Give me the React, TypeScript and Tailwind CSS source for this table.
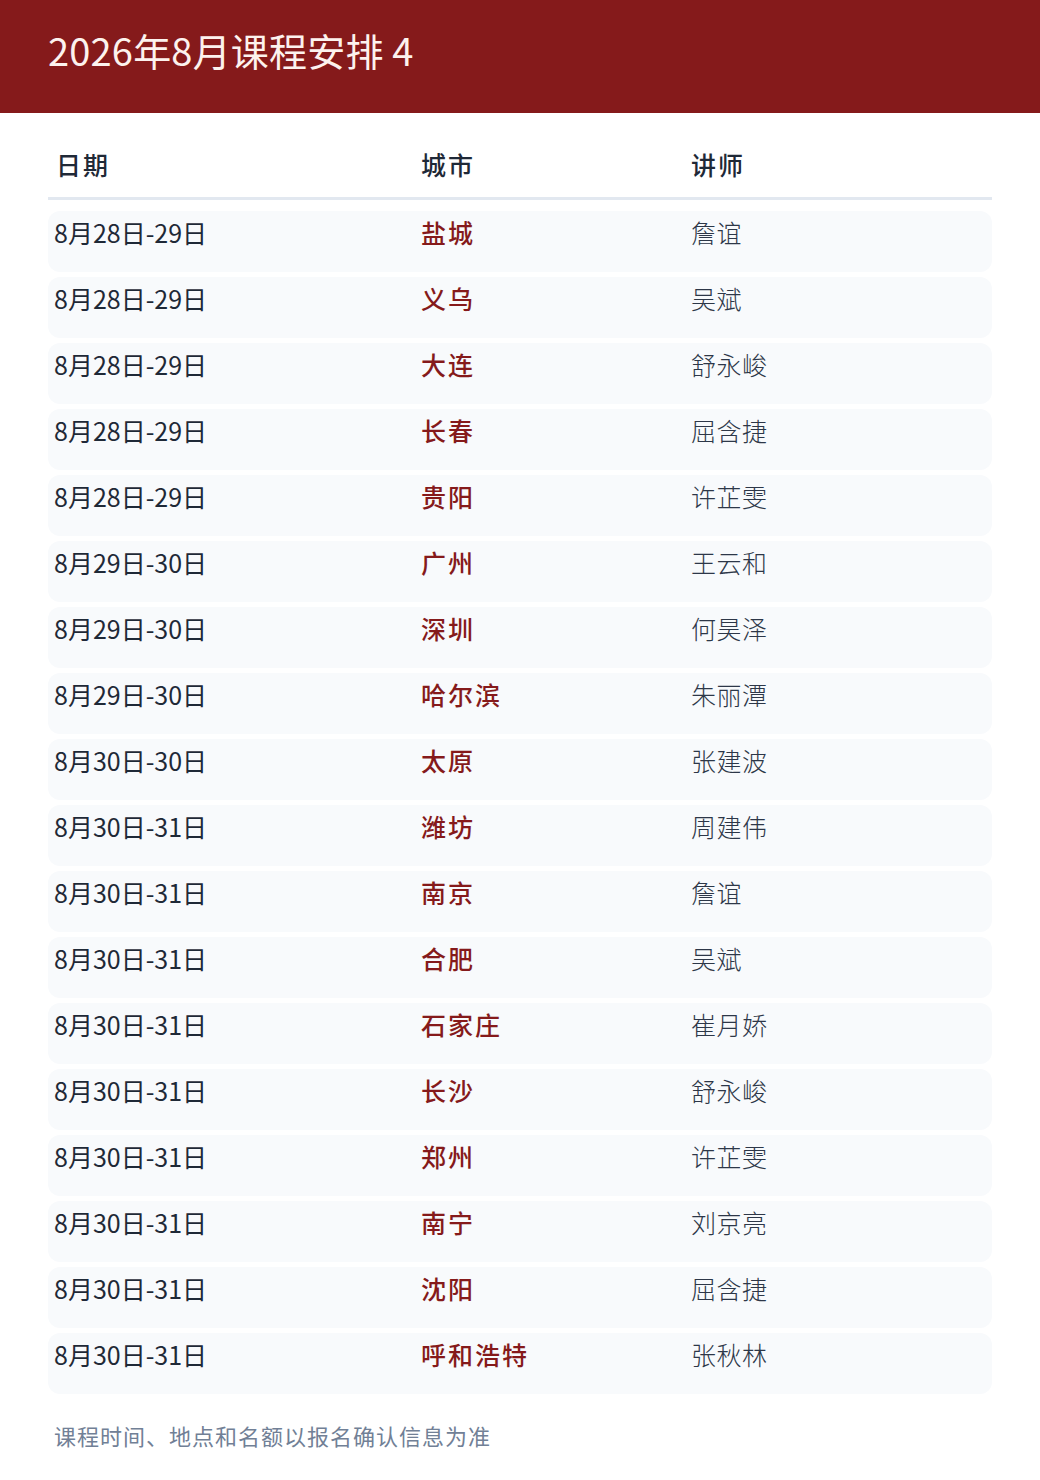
const rows: [string, string, string][] = [
  ["8月28日-29日", "盐城", "詹谊"],
  ["8月28日-29日", "义乌", "吴斌"],
  ["8月28日-29日", "大连", "舒永峻"],
  ["8月28日-29日", "长春", "屈含捷"],
  ["8月28日-29日", "贵阳", "许芷雯"],
  ["8月29日-30日", "广州", "王云和"],
  ["8月29日-30日", "深圳", "何昊泽"],
  ["8月29日-30日", "哈尔滨", "朱丽潭"],
  ["8月30日-30日", "太原", "张建波"],
  ["8月30日-31日", "潍坊", "周建伟"],
  ["8月30日-31日", "南京", "詹谊"],
  ["8月30日-31日", "合肥", "吴斌"],
  ["8月30日-31日", "石家庄", "崔月娇"],
  ["8月30日-31日", "长沙", "舒永峻"],
  ["8月30日-31日", "郑州", "许芷雯"],
  ["8月30日-31日", "南宁", "刘京亮"],
  ["8月30日-31日", "沈阳", "屈含捷"],
  ["8月30日-31日", "呼和浩特", "张秋林"],
];

export default function App() {
  return (
    <div className="w-[1040px] min-h-[1480px] bg-white font-['Noto_Sans_CJK_SC',sans-serif]">
      <header className="h-[113px] bg-[#851a1b] px-12 pt-[24px]">
        <h1 className="text-[38px] leading-[52px] tracking-[0.2px] text-[#fdf2ee]">2026年8月课程安排 4</h1>
      </header>

      <main className="px-12 pt-[28px]">
        <div className="grid grid-cols-[373px_270px_1fr] border-b-[3px] border-[#e2e8f0] pb-[10px] text-[25px] font-medium leading-[46px] tracking-[2px] text-[#1f2937]">
          <div className="pl-[8px]">日期</div>
          <div>城市</div>
          <div>讲师</div>
        </div>

        <div className="mt-[11px] flex flex-col gap-[5px]">
          {rows.map(([date, city, teacher], i) => (
            <div
              key={i}
              className="grid h-[61px] grid-cols-[373px_270px_1fr] rounded-xl bg-[#f8fafc] pt-[3px] text-[25px] leading-[36px]"
            >
              <div className="pl-[6px] text-[#1f2937]">{date}</div>
              <div className="font-medium tracking-[2px] text-[#851a1b]">{city}</div>
              <div className="font-light tracking-[0.5px] text-[#2d3748]">{teacher}</div>
            </div>
          ))}
        </div>

        <p className="mt-[24px] pl-[6px] text-[22px] leading-[34px] tracking-[1px] text-[#718096]">
          课程时间、地点和名额以报名确认信息为准
        </p>
      </main>
    </div>
  );
}
